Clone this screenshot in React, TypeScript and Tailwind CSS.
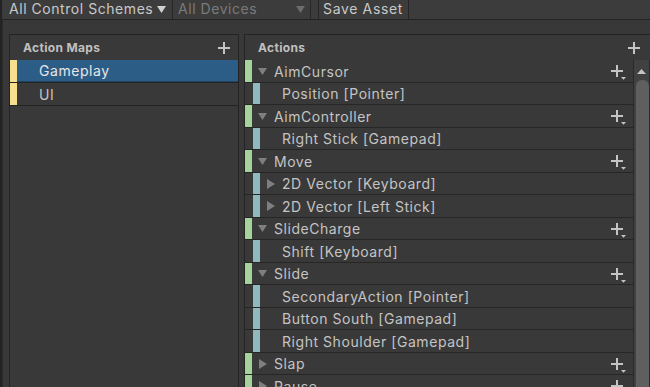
import React from "react";

type Row = { t: "action" | "binding" | "composite"; name: string; open?: boolean };

const rows: Row[] = [
  { t: "action", name: "AimCursor", open: true },
  { t: "binding", name: "Position [Pointer]" },
  { t: "action", name: "AimController", open: true },
  { t: "binding", name: "Right Stick [Gamepad]" },
  { t: "action", name: "Move", open: true },
  { t: "composite", name: "2D Vector [Keyboard]" },
  { t: "composite", name: "2D Vector [Left Stick]" },
  { t: "action", name: "SlideCharge", open: true },
  { t: "binding", name: "Shift [Keyboard]" },
  { t: "action", name: "Slide", open: true },
  { t: "binding", name: "SecondaryAction [Pointer]" },
  { t: "binding", name: "Button South [Gamepad]" },
  { t: "binding", name: "Right Shoulder [Gamepad]" },
  { t: "action", name: "Slap", open: false },
  { t: "action", name: "Pause", open: false },
];

const Plus = () => (
  <svg width="12" height="12" viewBox="0 0 12 12" className="block">
    <rect x="5" y="0" width="2" height="12" fill="#c4c4c4" />
    <rect x="0" y="5" width="12" height="2" fill="#c4c4c4" />
  </svg>
);

const PlusDrop = () => (
  <svg width="15" height="15" viewBox="0 0 15 15" className="block">
    <rect x="5" y="0" width="2" height="12" fill="#c4c4c4" />
    <rect x="0" y="5" width="12" height="2" fill="#c4c4c4" />
    <polygon points="10,12 15,12 12.5,14.8" fill="#c4c4c4" />
  </svg>
);

const Down = ({ color = "#7f7f7f" }: { color?: string }) => (
  <svg width="9" height="7" viewBox="0 0 9 7" className="block">
    <polygon points="0,0 9,0 4.5,7" fill={color} />
  </svg>
);

const Right = () => (
  <svg width="8" height="10" viewBox="0 0 8 10" className="block">
    <polygon points="0,0 8,5 0,10" fill="#7f7f7f" />
  </svg>
);

export default function App() {
  return (
    <div className="w-[650px] h-[387px] overflow-hidden bg-[#383838] flex flex-col border-l-2 border-[#232323] font-['Inter','Noto_Sans',sans-serif] text-[14px] tracking-[0.55px] text-[#c4c4c4] select-none">
      {/* Toolbar */}
      <div className="h-[20px] shrink-0 bg-[#3c3c3c] border-b border-[#232323] flex items-stretch">
        <div className="w-[171px] flex items-center pl-[7px] pr-[6px] justify-between border-r border-[#262626] pb-[1px]">
          <span className="leading-none text-[#c8c8c8]">All Control Schemes</span>
          <Down color="#d0d0d0" />
        </div>
        <div className="w-[138px] flex items-center pl-[5px] pr-[5px] justify-between border-r border-[#262626] pb-[1px]">
          <span className="leading-none text-[#7a7a7a]">All Devices</span>
          <Down color="#6c6c6c" />
        </div>
        <div className="w-[7px]" />
        <div className="w-[91px] flex items-center pl-[4px] border-l border-r border-[#262626] pb-[1px]">
          <span className="leading-none text-[#c8c8c8] tracking-[0.65px]">Save Asset</span>
        </div>
      </div>

      {/* Body */}
      <div className="flex-1 min-h-0 flex border-l border-[#2a2a2a] pt-[14px] pl-[6px] gap-[5px]">
        {/* Action Maps panel */}
        <div className="w-[230px] shrink-0 h-[400px] border border-[#232323] bg-[#393939] flex flex-col">
          <div className="h-[25px] shrink-0 flex items-center justify-between pl-[13px] pr-[8px]">
            <span className="text-[12px] font-bold tracking-[0.35px] text-[#c0c0c0]">Action Maps</span>
            <Plus />
          </div>
          <div className="h-[23px] flex border-b border-[#232323]">
            <div className="w-[7px] bg-[#f6e08e]" />
            <div className="flex-1 bg-[#2c5d87] border-b border-[#1e4466] flex items-center pl-[22px] text-[#e6e6e6]">
              Gameplay
            </div>
          </div>
          <div className="h-[23px] flex border-b border-[#232323]">
            <div className="w-[7px] bg-[#f6e08e]" />
            <div className="flex-1 flex items-center pl-[22px]">UI</div>
          </div>
        </div>

        {/* Actions panel */}
        <div className="flex-1 h-[400px] border-t border-l border-[#232323] bg-[#393939] flex flex-col">
          <div className="h-[25px] shrink-0 flex items-center justify-between pl-[13px] pr-[10px]">
            <span className="text-[12px] font-bold tracking-[0.35px] text-[#c0c0c0]">Actions</span>
            <Plus />
          </div>
          <div className="flex-1 flex min-h-0">
            <div className="flex-1 flex flex-col">
              {rows.map((r, i) => (
                <div
                  key={i}
                  className={`${i % 2 === 0 ? "h-[23px]" : "h-[22px]"} shrink-0 flex border-b border-[#262626]`}
                >
                  {r.t === "action" ? (
                    <>
                      <div className="w-[7px] bg-[#a4d49b]" />
                      <div className="w-[6px]" />
                      <div className="w-[9px] flex items-center justify-center">
                        {r.open ? <Down /> : <Right />}
                      </div>
                      <div className="flex-1 flex items-center pl-[7px]">{r.name}</div>
                      <div className="flex items-center pr-[7px] pt-[3px]">
                        <PlusDrop />
                      </div>
                    </>
                  ) : (
                    <>
                      <div className="w-[8px]" />
                      <div className="w-[7px] bg-[#8fb9bd]" />
                      {r.t === "composite" ? (
                        <>
                          <div className="w-[7px]" />
                          <div className="w-[8px] flex items-center">
                            <Right />
                          </div>
                          <div className="flex-1 flex items-center pl-[7px]">{r.name}</div>
                        </>
                      ) : (
                        <div className="flex-1 flex items-center pl-[22px]">{r.name}</div>
                      )}
                    </>
                  )}
                </div>
              ))}
            </div>
            {/* Scrollbar */}
            <div className="w-[17px] shrink-0 border-l border-r border-[#2a2a2a] bg-[#414141] flex flex-col items-center">
              <div className="h-[20px] w-full flex items-center justify-center pt-[2px]">
                <svg width="9" height="5" viewBox="0 0 9 5" className="block">
                  <polygon points="4.5,0 9,5 0,5" fill="#c4c4c4" />
                </svg>
              </div>
              <div className="w-[13px] ml-[2px] flex-1 bg-[#5f5f5f] rounded-t-[6px]" />
            </div>
          </div>
        </div>
      </div>
    </div>
  );
}
